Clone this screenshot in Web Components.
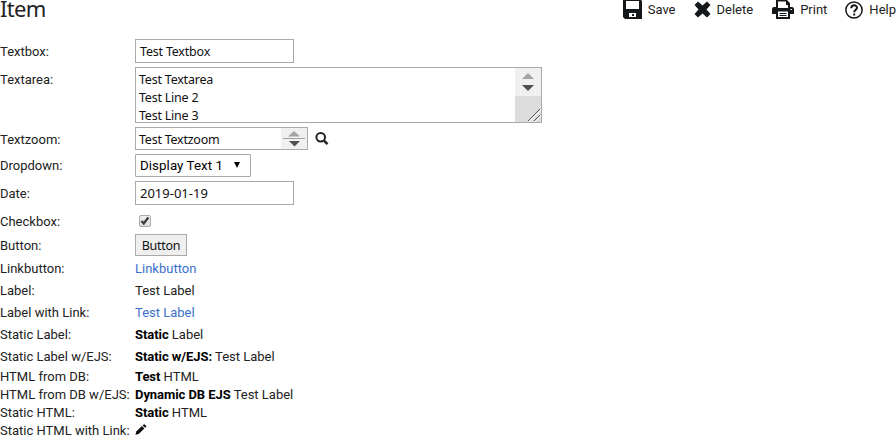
<!DOCTYPE html>
<html lang="en"><head><meta charset="utf-8"><title>Item</title>
<style>
html,body{margin:0;height:435px;overflow:hidden;background:#fff}
body{font:13px/18px Roboto,sans-serif;color:#222;--edit:"Noto Sans",sans-serif}
</style></head><body>
<item-page></item-page>
<script>
const define=(name,html,setup)=>customElements.define(name,class extends HTMLElement{
  connectedCallback(){
    if(this.shadowRoot)return;
    const t=document.createElement('template');t.innerHTML=html;
    this.attachShadow({mode:'open'}).append(t.content.cloneNode(true));
    if(setup)setup(this,this.shadowRoot);
  }
});
const icons={
 save:'<svg width="19" height="19" viewBox="0 0 19 19"><path fill="#15181b" d="M0 0h18l1 1v18H2L0 17z"/><path fill="#fff" d="M3 1h13v8H3zM6 13h7v4H6z"/><path fill="#15181b" d="M9 14h2v2h-2z"/></svg>',
 delete:'<svg width="17" height="17" viewBox="0 0 17 17"><path fill="#15181b" d="M4 .5 8.500 4.500 13 .5 16.500 4 12.500 8.500 16.500 13 13 16.500 8.500 12.500 4 16.500.500 13 4.500 8.500.500 4z"/></svg>',
 print:'<svg width="22" height="19" viewBox="0 0 22 19"><path fill="#15181b" d="M4 0h11l3 3v4h2a2 2 0 0 1 2 2v5h-4v5H4v-5H0V9a2 2 0 0 1 2-2h2z"/><path fill="#fff" d="M6 1.500h8V5h2v3H6zM6 11.500h10v5.500H6zM18.500 9h1.500v1h-1.500z"/><path stroke="#15181b" d="M7.500 13.500h7M7.500 15.500h7"/></svg>',
 help:'<svg width="18" height="18" viewBox="0 0 18 18" fill="none" stroke="#15181b"><circle cx="9" cy="9" r="8.100" stroke-width="1.500"/><path stroke-width="2" d="M6.300 7.200C6.300 3.300 12 3.500 12 6.800 12 9 9.200 8.700 9.200 11.200M9.200 12.400v2"/></svg>',
 search:'<svg width="14" height="14" viewBox="0 0 14 14" fill="none" stroke="#222"><circle cx="5.700" cy="5.300" r="4.300" stroke-width="2"/><path stroke-width="2.400" d="m9 8.700 3.500 3.500"/></svg>',
 pencil:'<svg width="12" height="11" viewBox="0 0 12 11"><path fill="#111" d="m.5 10.800.7-3.200L6.900 2l2.500 2.400-5.700 5.500zM7.600 1.400 8.700.4q.5-.5 1 0l1.400 1.400q.5.500 0 1L10.100 3.800z"/></svg>'
};
define('ui-icon','<style>:host{display:block;flex:none}svg{display:block}</style>',(h,r)=>r.innerHTML+=icons[h.getAttribute('name')]);
define('tool-action','<style>:host{display:flex;align-items:center;height:19px}span{white-space:nowrap}</style><slot name="icon"></slot><span><slot></slot></span>');
define('item-header',`<style>:host{display:flex;height:37px;justify-content:space-between}
h1{font:22px/30px var(--edit);margin:-7px 0 0;color:#222;font-weight:400;height:30px;letter-spacing:-.7px}nav{display:flex}tool-action{margin-right:18px}tool-action:last-child{margin-right:0}tool-action ui-icon{margin-right:6px}
</style><h1>Item</h1><nav>
<tool-action><ui-icon slot="icon" name="save"></ui-icon>Save</tool-action>
<tool-action style="margin-right:19px"><ui-icon slot="icon" name="delete"></ui-icon>Delete</tool-action>
<tool-action><ui-icon slot="icon" name="print"></ui-icon>Print</tool-action>
<tool-action><ui-icon slot="icon" name="help"></ui-icon>Help</tool-action></nav>`);
define('form-row',`<style>:host{display:grid;grid-template-columns:135px 1fr;align-items:center;white-space:nowrap}
label{padding-top:var(--drop,2px)}.v{display:flex;align-items:center}</style><label></label><div class="v"><slot></slot></div>`,(h,r)=>{r.querySelector('label').textContent=h.getAttribute('label');h.style.height=h.getAttribute('h')+'px'});
define('text-box','<style>:host{display:flex;box-sizing:border-box;width:159px;height:24px;border:1px solid #a9a9a9;align-items:center;padding:1px 0 0 4px;font:12.5px/18px var(--edit);letter-spacing:-.2px;color:#111}:host([numeric]){font-size:13px;letter-spacing:0;padding-top:0}</style><slot></slot>');
define('spin-arrows',`<style>:host{display:block;background:#f0f0f0;flex:none}svg{display:block}</style>`,(h,r)=>{
 const z=h.hasAttribute('divided');
 r.innerHTML+=z?'<svg width="26" height="21" viewBox="0 0 26 21"><path fill="#a3a3a3" d="M7 8.500 13 3l6 5.500zM2 10h22v1H2z"/><path fill="#505050" d="M8 13h11l-5.500 5.500z"/></svg>'
 :'<svg width="26" height="28" viewBox="0 0 26 28"><path fill="#a3a3a3" d="m7 11 6-6 6 6z"/><path fill="#505050" d="M7 17h12l-6 6z"/></svg>'});
define('text-area',`<style>:host{display:flex;box-sizing:border-box;width:407px;height:56px;border:1px solid #a9a9a9;justify-content:space-between;font:12.5px/18px var(--edit);letter-spacing:-.22px;color:#111}.t{padding:3px 3px 0;height:54px;box-sizing:border-box;white-space:pre}.s{width:26px;background:#dcdcdc;display:flex;flex-direction:column;justify-content:space-between}.s>svg{align-self:flex-end}</style><div class="t"><slot></slot></div><div class="s"><spin-arrows></spin-arrows><svg width="14" height="14" shape-rendering="crispEdges" fill="none"><path stroke="#fff" d="M2 14 14 2M8 14l6-6"/><path stroke="#555" d="M1 13 13 1M7 13l6-6"/></svg></div>`);
define('text-zoom',`<style>:host{display:flex;box-sizing:border-box;width:173px;height:23px;border:1px solid #a9a9a9;justify-content:space-between;font:12.5px/21px var(--edit);letter-spacing:-.24px;color:#111}span{padding:1px 0 0 3px}</style><span><slot></slot></span><spin-arrows divided></spin-arrows>`);
define('drop-down',`<style>:host{display:flex;box-sizing:border-box;width:116px;height:23px;border:1px solid #a9a9a9;border-radius:1px;align-items:center;padding:0 9px 0 4px;justify-content:space-between;color:#000;font-size:13.33px;letter-spacing:.06px}</style><slot></slot><svg width="8" height="7"><path d="M1 0h6L4 6z"/></svg>`);
define('check-box',`<style>:host{display:block;width:12px;height:12px;box-sizing:border-box;border:1px solid #aaa;border-radius:2px;background:linear-gradient(#eee,#ddd);margin:1px 0 0 4px}svg{display:block}</style><svg width="10" height="10" fill="none" stroke="#3c3c3c" stroke-width="2.300"><path d="m1.500 5 2.300 2.500 4.500-6"/></svg>`);
define('push-button',`<style>:host{display:flex;box-sizing:border-box;width:52px;height:22px;border:1px solid #a9a9a9;background:#efefef;align-items:center;justify-content:center;padding-top:2px;font:12.5px/18px var(--edit);letter-spacing:-.25px;color:#111}</style><slot></slot>`);
define('text-value',`<style>:host{display:block;padding-top:var(--drop,2px)}:host([link]){color:#3b6fcb}::slotted(b){letter-spacing:-.06px;color:#000}</style><slot></slot>`);
define('item-page',`<style>:host{display:block;width:896px}main{display:flex;flex-direction:column}form-row{flex:none}.up{--drop:3px}.tight{--drop:1px}</style>
<item-header></item-header><main>
<form-row h="28" label="Textbox:"><text-box>Test Textbox</text-box></form-row>
<form-row h="60" label="Textarea:" class="ta"><text-area>Test Textarea
Test Line 2
Test Line 3</text-area></form-row>
<form-row h="27" label="Textzoom:" class="up"><text-zoom>Test Textzoom</text-zoom><ui-icon name="search" style="margin-left:7px"></ui-icon></form-row>
<form-row h="27" label="Dropdown:" style="--drop:0px"><drop-down>Display Text 1</drop-down></form-row>
<form-row h="28" label="Date:"><text-box numeric>2019-01-19</text-box></form-row>
<form-row h="26" label="Checkbox:" class="up"><check-box></check-box></form-row>
<form-row h="24" label="Button:"><push-button>Button</push-button></form-row>
<form-row h="22" label="Linkbutton:"><text-value link>Linkbutton</text-value></form-row>
<form-row h="22" label="Label:"><text-value>Test Label</text-value></form-row>
<form-row h="22" label="Label with Link:"><text-value link>Test Label</text-value></form-row>
<form-row h="22" label="Static Label:"><text-value><b>Static</b> Label</text-value></form-row>
<form-row h="22" label="Static Label w/EJS:"><text-value><b>Static w/EJS:</b> Test Label</text-value></form-row>
<form-row h="18" label="HTML from DB:" class="tight"><text-value><b>Test</b> HTML</text-value></form-row>
<form-row h="18" label="HTML from DB w/EJS:" class="tight"><text-value><b>Dynamic DB EJS</b> Test Label</text-value></form-row>
<form-row h="18" label="Static HTML:" class="tight"><text-value><b>Static</b> HTML</text-value></form-row>
<form-row h="18" label="Static HTML with Link:" class="tight"><ui-icon name="pencil" style="margin-top:-3px"></ui-icon></form-row>
</main>`,(h,r)=>{const l=r.querySelector('.ta').shadowRoot.querySelector('label');l.style.alignSelf='start';l.style.marginTop='4px'});
</script></body></html>
